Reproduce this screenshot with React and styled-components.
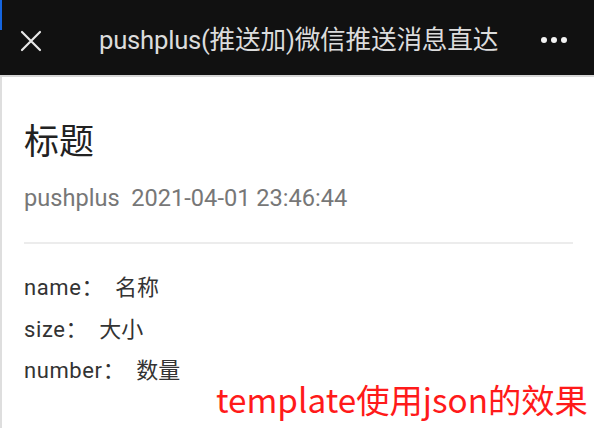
import styled, { createGlobalStyle } from 'styled-components';

const GlobalStyle = createGlobalStyle`
  html, body {
    margin: 0;
    padding: 0;
    background: #fff;
  }
  body {
    font-family: Roboto, "Noto Sans CJK SC", sans-serif;
  }
`;

const fields = [
  { key: 'name', value: '名称' },
  { key: 'size', value: '大小' },
  { key: 'number', value: '数量' },
];

export default function App() {
  return (
    <>
      <GlobalStyle />
      <Page>
        <TopBar>
          <Accent />
          <IconButton aria-label="close">
            <svg width="22" height="22" viewBox="0 0 22 22">
              <path d="M2 2 L20 20 M20 2 L2 20" stroke="#e8e8e8" strokeWidth="2.2" strokeLinecap="round" />
            </svg>
          </IconButton>
          <BarTitle>pushplus(推送加)微信推送消息直达</BarTitle>
          <MoreButton aria-label="more">
            <Dot />
            <Dot />
            <Dot />
          </MoreButton>
        </TopBar>
        <Content>
          <Heading>标题</Heading>
          <Meta>pushplus&nbsp;&nbsp;2021-04-01 23:46:44</Meta>
          <Divider />
          <FieldList>
            {fields.map(f => (
              <Field key={f.key}>
                <FieldKey>{f.key}：</FieldKey>
                <FieldValue>{f.value}</FieldValue>
              </Field>
            ))}
          </FieldList>
          <Note>template使用json的效果</Note>
        </Content>
      </Page>
    </>
  );
}

const Page = styled.div`
  width: 594px;
  height: 428px;
  overflow: hidden;
  display: flex;
  flex-direction: column;
`;

const TopBar = styled.header`
  position: relative;
  height: 75px;
  background: #111111;
  border-bottom: 2px solid #d6d6d6;
  display: flex;
  align-items: center;
  padding: 0 27px 0 20px;
  box-sizing: content-box;
`;

const Accent = styled.span`
  position: absolute;
  left: 0;
  top: 0;
  width: 2px;
  height: 30px;
  background: #1565e0;
`;

const IconButton = styled.div`
  width: 22px;
  height: 22px;
  display: flex;
  margin-top: 7px;
`;

const BarTitle = styled.h1`
  flex: 1;
  margin: 0 0 0 57px;
  font-size: 25.7px;
  font-weight: 400;
  color: #dcdcdc;
  white-space: nowrap;
  letter-spacing: -0.25px;
`;

const MoreButton = styled.div`
  display: flex;
  gap: 4px;
  margin-top: 4px;
`;

const Dot = styled.span`
  width: 6px;
  height: 6px;
  border-radius: 50%;
  background: #f2f2f2;
`;

const Content = styled.main`
  position: relative;
  flex: 1;
  border-left: 2px solid #dedede;
  padding: 44px 21px 0 22px;
`;

const Heading = styled.h2`
  margin: 0;
  font-size: 35px;
  font-weight: 400;
  line-height: 44px;
  color: #222;
`;

const Meta = styled.div`
  margin-top: 18px;
  font-size: 23.6px;
  line-height: 30px;
  color: #777;
`;

const Divider = styled.hr`
  margin: 29px 0 0;
  border: none;
  border-top: 2px solid #ececec;
`;

const FieldList = styled.div`
  margin-top: 30px;
  display: flex;
  flex-direction: column;
  gap: 13px;
`;

const Field = styled.div`
  font-size: 22px;
  line-height: 28.5px;
  color: #333;
`;

const FieldKey = styled.span`
  letter-spacing: 0.6px;
`;

const FieldValue = styled.span`
  margin-left: 11px;
`;

const Note = styled.div`
  position: absolute;
  left: 214px;
  top: 300px;
  font-family: "Noto Sans CJK SC", sans-serif;
  font-size: 33.3px;
  line-height: 44px;
  color: #ff1a1a;
  white-space: nowrap;
`;
